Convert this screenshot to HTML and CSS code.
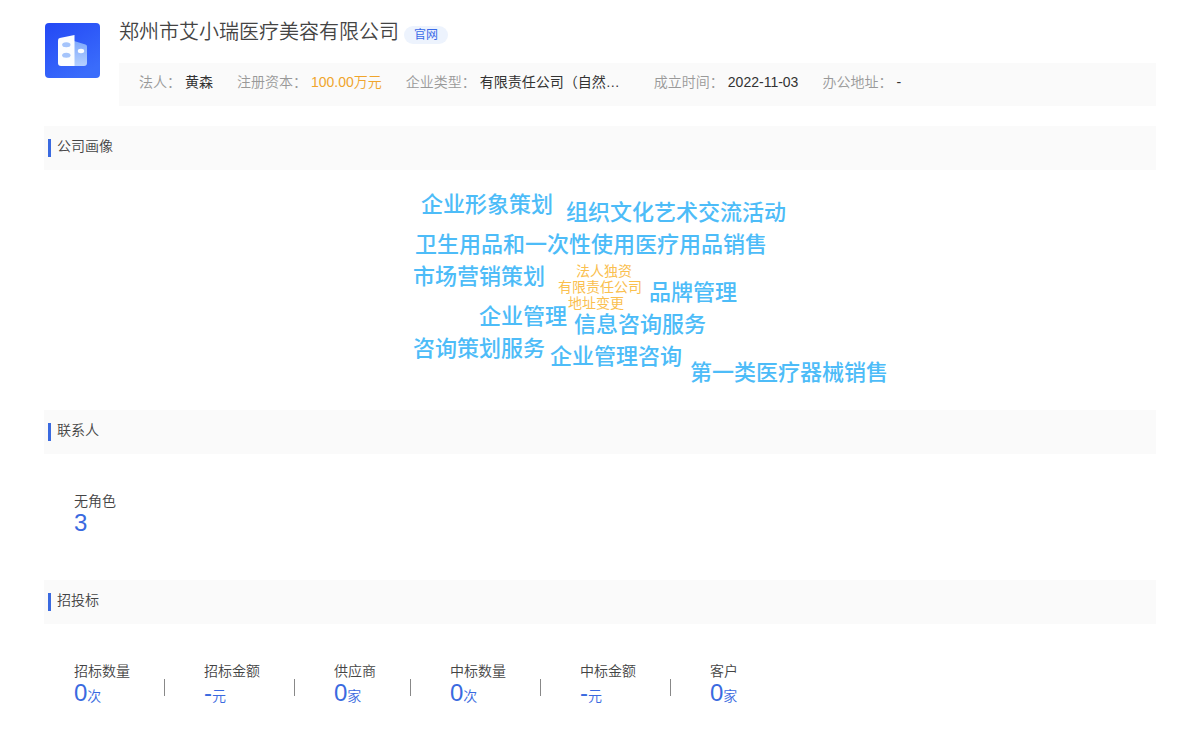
FILE: index.html
```html
<!DOCTYPE html>
<html lang="zh-CN">
<head>
<meta charset="utf-8">
<title>郑州市艾小瑞医疗美容有限公司</title>
<link rel="stylesheet" href="styles.css">
</head>
<body>
<main class="page">
  <header class="company">
    <svg class="logo" viewBox="0 0 55 55" aria-hidden="true">
      <defs>
        <linearGradient id="bg" x1="0" y1="0" x2="0.6" y2="1">
          <stop offset="0" stop-color="#2348f5"/>
          <stop offset="1" stop-color="#3a6cfb"/>
        </linearGradient>
        <linearGradient id="wing" x1="0" y1="0" x2="0" y2="1">
          <stop offset="0" stop-color="#7fa9fb"/>
          <stop offset="1" stop-color="#b4d0ff"/>
        </linearGradient>
      </defs>
      <rect width="55" height="55" rx="4" fill="url(#bg)"/>
      <path d="M29 18l11.500 3.600a2 2 0 0 1 1.500 2V40a3 3 0 0 1-3 3H29z" fill="url(#wing)"/>
      <path d="M29.500 12v31H16a3 3 0 0 1-3-3V17.500a2.500 2.500 0 0 1 1.800-2.400z" fill="#fbfdff"/>
      <ellipse cx="21.300" cy="21.800" rx="4.200" ry="2.500" fill="#a4c4fb"/>
      <ellipse cx="21.300" cy="32.200" rx="4.200" ry="2.500" fill="#a4c4fb"/>
      <ellipse cx="36" cy="28" rx="3.200" ry="2.200" fill="#fbfdff"/>
    </svg>
    <div class="company-main">
      <div class="title-row">
        <h1 class="title">郑州市艾小瑞医疗美容有限公司</h1>
        <a class="site-link" href="#">官网</a>
      </div>
      <dl class="facts">
        <div class="fact"><dt>法人：</dt><dd>黄森</dd></div>
        <div class="fact"><dt>注册资本：</dt><dd class="money">100.00万元</dd></div>
        <div class="fact"><dt>企业类型：</dt><dd class="kind">有限责任公司（自然…</dd></div>
        <div class="fact"><dt>成立时间：</dt><dd>2022-11-03</dd></div>
        <div class="fact"><dt>办公地址：</dt><dd>-</dd></div>
      </dl>
    </div>
  </header>

  <section>
    <h2 class="section-title">公司画像</h2>
    <div class="cloud-wrap">
      <div class="cloud">
        <span class="word w1">企业形象策划</span>
        <span class="word w2">组织文化艺术交流活动</span>
        <span class="word w3">卫生用品和一次性使用医疗用品销售</span>
        <span class="word w4">市场营销策划</span>
        <span class="word minor w5">法人独资</span>
        <span class="word minor w6">有限责任公司</span>
        <span class="word minor w7">地址变更</span>
        <span class="word w8">品牌管理</span>
        <span class="word w9">企业管理</span>
        <span class="word w10">信息咨询服务</span>
        <span class="word w11">咨询策划服务</span>
        <span class="word w12">企业管理咨询</span>
        <span class="word w13">第一类医疗器械销售</span>
      </div>
    </div>
  </section>

  <section>
    <h2 class="section-title">联系人</h2>
    <div class="stats">
      <div class="stat"><span class="stat-label">无角色</span><span class="stat-value"><b>3</b></span></div>
    </div>
  </section>

  <section>
    <h2 class="section-title">招投标</h2>
    <div class="stats">
      <div class="stat"><span class="stat-label">招标数量</span><span class="stat-value"><b>0</b>次</span></div>
      <div class="stat"><span class="stat-label">招标金额</span><span class="stat-value"><b>-</b>元</span></div>
      <div class="stat"><span class="stat-label">供应商</span><span class="stat-value"><b>0</b>家</span></div>
      <div class="stat"><span class="stat-label">中标数量</span><span class="stat-value"><b>0</b>次</span></div>
      <div class="stat"><span class="stat-label">中标金额</span><span class="stat-value"><b>-</b>元</span></div>
      <div class="stat"><span class="stat-label">客户</span><span class="stat-value"><b>0</b>家</span></div>
    </div>
  </section>
</main>
</body>
</html>
```

FILE: styles.css
```css
* {
  box-sizing: border-box;
}

body {
  margin: 0;
  background: #fff;
  color: #444;
  font: 350 14px/20px "Liberation Sans", "Noto Sans CJK SC", sans-serif;
}

h1, h2, dl, dd {
  margin: 0;
  font-weight: inherit;
}

.page {
  padding: 18px 44px;
}

.company {
  display: flex;
  gap: 19px;
  margin-bottom: 20px;
}

.logo {
  flex: none;
  width: 55px;
  height: 55px;
  margin: 5px 0 0 1px;
}

.company-main {
  flex: 1;
  min-width: 0;
}

.title-row {
  display: flex;
  align-items: flex-end;
  gap: 5px;
  margin-bottom: 16px;
}

.title {
  font-size: 20px;
  line-height: 29px;
}

.site-link {
  margin-bottom: 3px;
  padding: 0 10px;
  border-radius: 9px;
  background: #edf3fd;
  color: #3a6ae8;
  font-size: 12px;
  font-weight: 400;
  line-height: 18px;
  text-decoration: none;
}

.facts {
  display: flex;
  flex-wrap: wrap;
  gap: 0 24px;
  padding: 9px 20px 14px;
  background: #fafafa;
}

.fact {
  display: flex;
  gap: 4px;
}

.fact dt {
  color: #999;
}

.fact dd {
  color: #333;
  font-weight: 400;
}

.fact .money {
  color: #f0a52c;
  font-weight: 350;
}

.fact .kind {
  width: 150px;
}

.section-title {
  display: flex;
  align-items: flex-start;
  gap: 6px;
  padding: 10px 4px 13px;
  background: #fafafa;
  font-size: 14px;
  line-height: 20px;
}

.section-title::before {
  content: "";
  width: 3px;
  height: 18px;
  margin-top: 3px;
  background: #3a6ae0;
}

.cloud-wrap {
  display: flex;
  justify-content: center;
  padding: 20px 0;
}

.cloud {
  position: relative;
  width: 400px;
  height: 200px;
}

.word {
  position: absolute;
  color: #4dbcf8;
  font-size: 22px;
  font-weight: 500;
  line-height: 30px;
  white-space: nowrap;
}

.minor {
  color: #fac04f;
  font-size: 14px;
  font-weight: 400;
  line-height: 20px;
}

.w1 { left: 21px; top: 0; }
.w2 { left: 166px; top: 8px; }
.w3 { left: 15px; top: 40px; }
.w4 { left: 13px; top: 72px; }
.w5 { left: 176px; top: 71px; }
.w6 { left: 158px; top: 87px; }
.w7 { left: 168px; top: 103px; }
.w8 { left: 249px; top: 88px; }
.w9 { left: 79px; top: 112px; }
.w10 { left: 174px; top: 120px; }
.w11 { left: 13px; top: 144px; }
.w12 { left: 150px; top: 152px; }
.w13 { left: 290px; top: 168px; }

.stats {
  display: flex;
  flex-wrap: wrap;
  padding: 37px 30px 43px;
}

.stat {
  display: grid;
  grid-template-columns: auto 1px;
  grid-template-rows: 20px 26px;
  column-gap: 34px;
  align-items: center;
  padding-right: 39px;
}

.stat:not(:last-child)::after {
  content: "";
  grid-column: 2;
  grid-row: 1 / 3;
  height: 17px;
  margin-top: 7px;
  background: #888;
}

.stat-label,
.stat-value {
  grid-column: 1;
}

.stat-value {
  color: #3a6ae0;
  line-height: 26px;
}

.stat-value b {
  font-size: 24px;
  font-weight: 400;
}
```
